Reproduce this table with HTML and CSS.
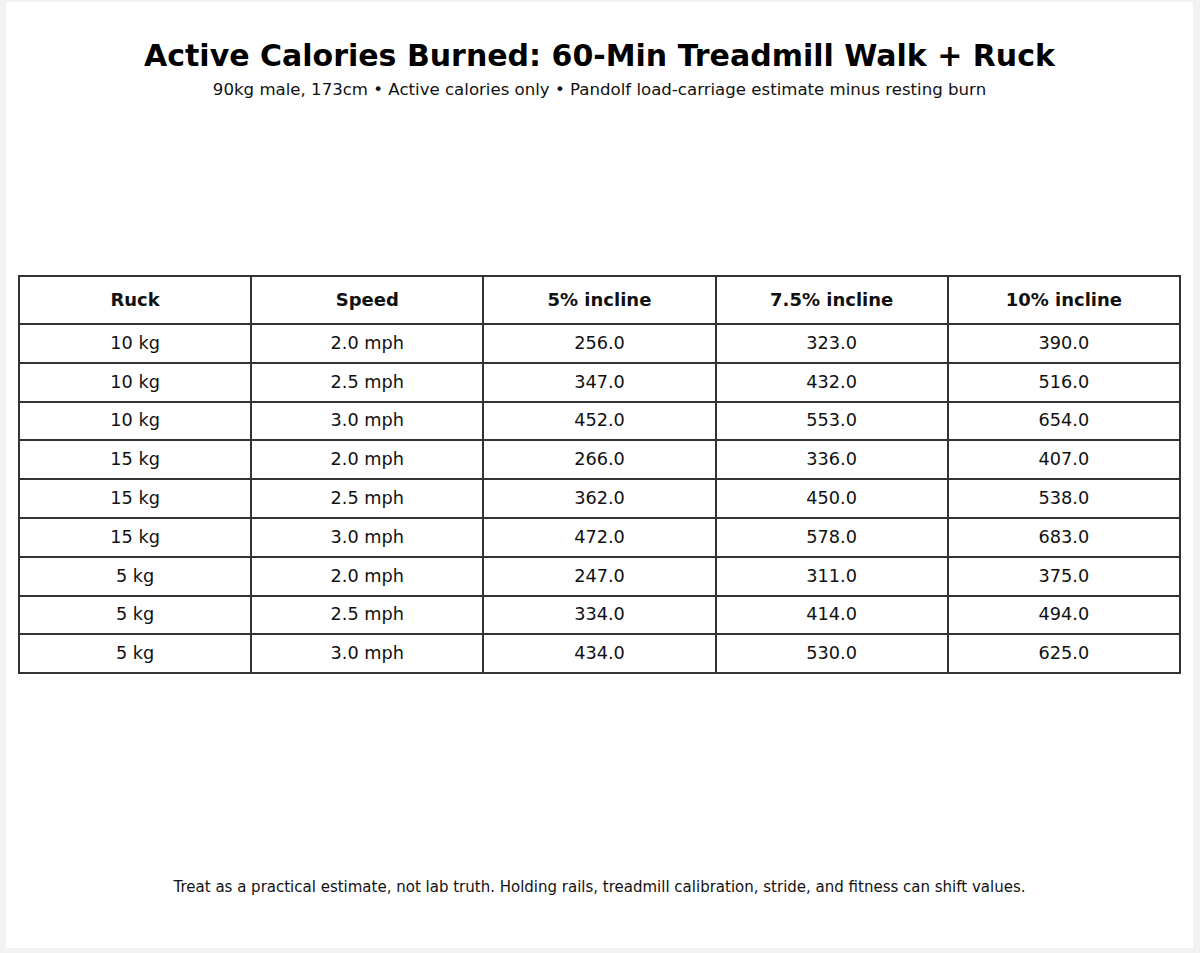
FILE: index.html
```html
<!DOCTYPE html>
<html lang="en">
<head>
<meta charset="utf-8">
<title>Active Calories Burned</title>
<link rel="stylesheet" href="styles.css">
</head>
<body>
<main class="panel">
  <header class="head">
    <h1 class="title">Active Calories Burned: 60-Min Treadmill Walk + Ruck</h1>
    <p class="subtitle">90kg male, 173cm • Active calories only • Pandolf load-carriage estimate minus resting burn</p>
  </header>
  <table class="grid">
    <thead>
      <tr><th>Ruck</th><th>Speed</th><th>5% incline</th><th>7.5% incline</th><th>10% incline</th></tr>
    </thead>
    <tbody>
      <tr><td>10 kg</td><td>2.0 mph</td><td>256.0</td><td>323.0</td><td>390.0</td></tr>
      <tr><td>10 kg</td><td>2.5 mph</td><td>347.0</td><td>432.0</td><td>516.0</td></tr>
      <tr><td>10 kg</td><td>3.0 mph</td><td>452.0</td><td>553.0</td><td>654.0</td></tr>
      <tr><td>15 kg</td><td>2.0 mph</td><td>266.0</td><td>336.0</td><td>407.0</td></tr>
      <tr><td>15 kg</td><td>2.5 mph</td><td>362.0</td><td>450.0</td><td>538.0</td></tr>
      <tr><td>15 kg</td><td>3.0 mph</td><td>472.0</td><td>578.0</td><td>683.0</td></tr>
      <tr><td>5 kg</td><td>2.0 mph</td><td>247.0</td><td>311.0</td><td>375.0</td></tr>
      <tr><td>5 kg</td><td>2.5 mph</td><td>334.0</td><td>414.0</td><td>494.0</td></tr>
      <tr><td>5 kg</td><td>3.0 mph</td><td>434.0</td><td>530.0</td><td>625.0</td></tr>
    </tbody>
  </table>
  <p class="note">Treat as a practical estimate, not lab truth. Holding rails, treadmill calibration, stride, and fitness can shift values.</p>
</main>
</body>
</html>
```
FILE: styles.css
```css
html, body {
  margin: 0;
  padding: 0;
}
body {
  background: #f2f2f2;
  font-family: "DejaVu Sans", "Liberation Sans", sans-serif;
  color: #111;
  width: 1200px;
  height: 953px;
  overflow: hidden;
}
.panel {
  box-sizing: border-box;
  margin: 2px 0 0 6px;
  width: 1187px;
  height: 946px;
  background: #fff;
  padding: 37px 12px 0 12px;
  display: flex;
  flex-direction: column;
}
.head {
  text-align: center;
}
.title {
  margin: 0;
  font-size: 30px;
  line-height: 34px;
  font-weight: bold;
  color: #000;
}
.subtitle {
  margin: 7px 0 0 0;
  font-size: 16.6px;
  line-height: 20px;
  color: #111;
}
.grid {
  margin-top: 175px;
  width: 100%;
  table-layout: fixed;
  border-collapse: collapse;
  font-size: 17.7px;
}
.grid th, .grid td {
  border: 2px solid #333;
  text-align: center;
  vertical-align: middle;
  padding: 0;
  box-sizing: border-box;
}
.grid th {
  height: 48px;
  font-size: 18px;
  font-weight: bold;
  padding-bottom: 2px;
}
.grid td {
  height: 38.8px;
  padding-bottom: 1px;
}
.note {
  margin: auto 0 0 0;
  padding-bottom: 52px;
  text-align: center;
  font-size: 15px;
  line-height: 18px;
  color: #111;
}
```
